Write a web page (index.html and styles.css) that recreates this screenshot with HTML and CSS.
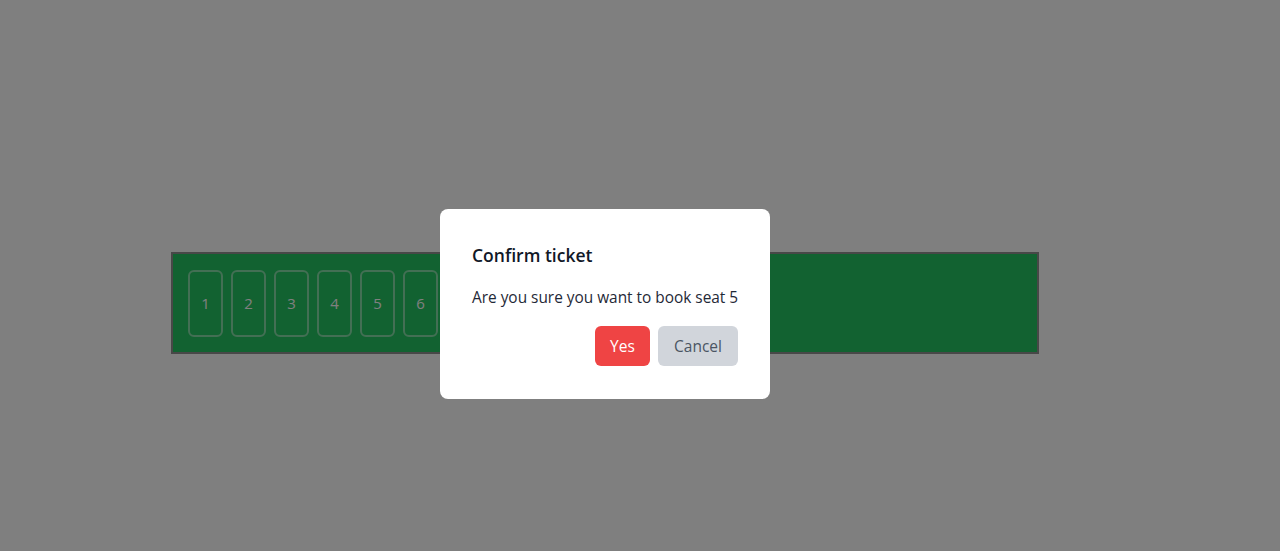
FILE: index.html
```html
<!DOCTYPE html>
<html>
<head>
<meta charset="utf-8">
<link rel="stylesheet" href="styles.css">
</head>
<body>
<main class="page">
  <div class="bus">
    <div class="seat">1</div>
    <div class="seat">2</div>
    <div class="seat">3</div>
    <div class="seat">4</div>
    <div class="seat">5</div>
    <div class="seat">6</div>
  </div>
</main>
<div class="overlay">
  <div class="modal">
    <h2 class="modal-title">Confirm ticket</h2>
    <p class="modal-text">Are you sure you want to book seat 5</p>
    <div class="modal-actions">
      <button class="btn btn-yes">Yes</button>
      <button class="btn btn-cancel">Cancel</button>
    </div>
  </div>
</div>
</body>
</html>
```
FILE: styles.css
```css
* { box-sizing: border-box; }
html, body { margin: 0; height: 100%; }
body {
  background: #ffffff;
  font-family: "Open Sans", "Noto Sans", sans-serif;
}
.page {
  padding: 252px 241px 0 171px;
}
.bus {
  height: 102px;
  background: #24c562;
  border: 2px solid #909090;
  display: flex;
  align-items: center;
  gap: 8px;
  padding: 0 15px;
}
.seat {
  width: 35px;
  height: 67px;
  border: 2px solid rgba(255, 255, 255, 0.45);
  border-radius: 6px;
  display: flex;
  align-items: center;
  justify-content: center;
  font-size: 15px;
  color: #ffffff;
}
.overlay {
  position: fixed;
  inset: 0;
  background: rgba(0, 0, 0, 0.5);
  display: flex;
  justify-content: center;
  align-items: flex-start;
  padding: 209px 70px 0 0;
}
.modal {
  width: 330px;
  background: #fff;
  border-radius: 8px;
  padding: 32px 32px 33px;
}
.modal-title {
  margin: 0;
  font-size: 17.5px;
  font-weight: 600;
  line-height: 28px;
  color: #111827;
}
.modal-text {
  margin: 17px 0 0;
  font-size: 15.4px;
  line-height: 24px;
  color: #1f2937;
  white-space: nowrap;
}
.modal-actions {
  margin-top: 16px;
  display: flex;
  justify-content: flex-end;
  gap: 8px;
}
.btn {
  height: 40px;
  border: none;
  border-radius: 6px;
  font-family: inherit;
  font-size: 15.5px;
  padding: 0;
}
.btn-yes { background: #ef4444; color: #fff; width: 55px; }
.btn-cancel { background: #d1d5db; color: #4b5563; width: 80px; }
```
